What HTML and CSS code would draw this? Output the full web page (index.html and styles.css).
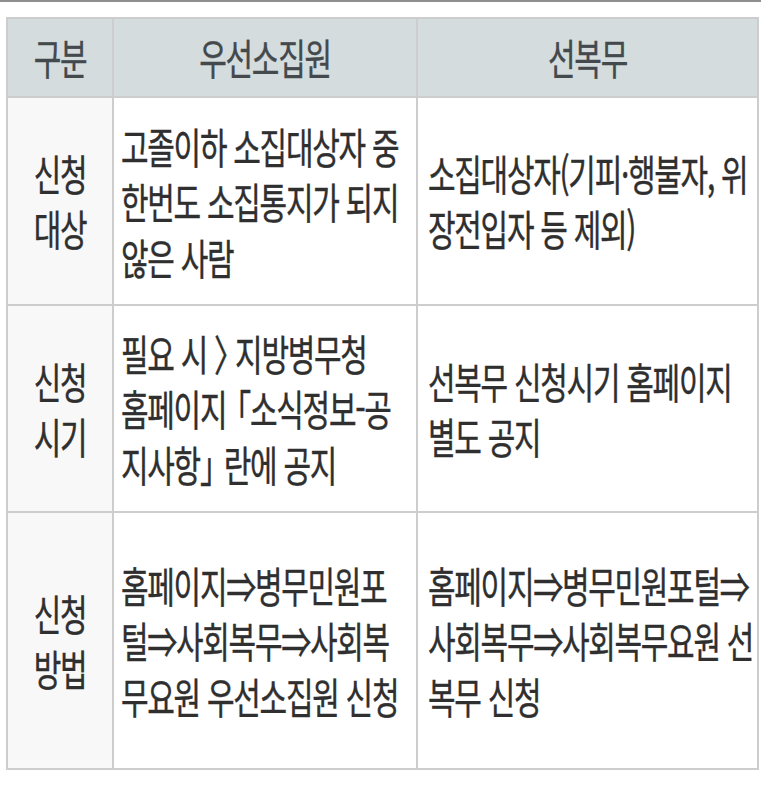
FILE: index.html
```html
<!DOCTYPE html>
<html lang="ko">
<head>
<meta charset="utf-8">
<title>우선소집원 / 선복무</title>
<link rel="stylesheet" href="styles.css">
</head>
<body>
<div class="topline"></div>
<table class="grid">
  <colgroup>
    <col class="c1"><col class="c2"><col class="c3">
  </colgroup>
  <thead>
    <tr class="rh">
      <th><span class="t">구분</span></th>
      <th><span class="t">우선소집원</span></th>
      <th><span class="t">선복무</span></th>
    </tr>
  </thead>
  <tbody>
    <tr class="r1">
      <td class="lab"><span class="t">신청<br>대상</span></td>
      <td class="m"><span class="t">고졸이하 소집대상자 중<br>한번도 소집통지가 되지<br>않은 사람</span></td>
      <td class="r"><span class="t">소집대상자(기피·행불자, 위<br>장전입자 등 제외)</span></td>
    </tr>
    <tr class="r2">
      <td class="lab"><span class="t">신청<br>시기</span></td>
      <td class="m"><span class="t">필요 시 <span class="gt">〉</span>지방병무청<br>홈페이지 <span class="lb">「</span>소식정보-공<br>지사항<span class="rb">」</span> 란에 공지</span></td>
      <td class="r"><span class="t">선복무 신청시기 홈페이지<br>별도 공지</span></td>
    </tr>
    <tr class="r3">
      <td class="lab"><span class="t">신청<br>방법</span></td>
      <td class="m"><span class="t">홈페이지⇒병무민원포<br>털⇒사회복무⇒사회복<br>무요원 우선소집원 신청</span></td>
      <td class="r"><span class="t">홈페이지⇒병무민원포털⇒<br>사회복무⇒사회복무요원 선<br>복무 신청</span></td>
    </tr>
  </tbody>
</table>
</body>
</html>
```

FILE: styles.css
```css
html, body {
  margin: 0;
  padding: 0;
  background: #ffffff;
}
body {
  width: 761px;
  height: 799px;
  overflow: hidden;
  font-family: "Noto Sans CJK KR", "Noto Sans", sans-serif;
  color: #2f2f2f;
}
.topline {
  height: 2px;
  background: #8f8f8f;
}
.grid {
  margin: 15px 0 0 6px;
  border-collapse: separate;
  border-spacing: 2px;
  background: #cdcdcd;
  table-layout: fixed;
  width: 753px;
}
.c1 { width: 104px; }
.c2 { width: 302px; }
.c3 { width: 339px; }
.grid th, .grid td {
  padding: 0;
  vertical-align: middle;
  font-weight: 400;
}
.grid th {
  background: #d5dcdd;
  text-align: center;
  color: #43494c;
}
.grid td {
  background: #ffffff;
  text-align: left;
}
.grid td.m { padding-left: 7px; }
.grid td.r { padding-left: 10px; }
.grid td.lab {
  background: #f8f8f8;
  text-align: center;
  padding-left: 0;
}
.rh { height: 77px; }
.r1 { height: 206px; }
.r2 { height: 205px; }
.r3 { height: 255px; }
.t {
  display: inline-block;
  font-size: 30px;
  line-height: 39px;
  letter-spacing: -1.3px;
  white-space: nowrap;
  transform: scaleY(1.42);
  transform-origin: 50% 50%;
  -webkit-text-stroke: 0.3px currentColor;
}
.gt { margin: 0 -4px 0 0; letter-spacing: -5px; }
.lb { margin-left: -12px; }
.rb { margin-right: -12px; }
```
